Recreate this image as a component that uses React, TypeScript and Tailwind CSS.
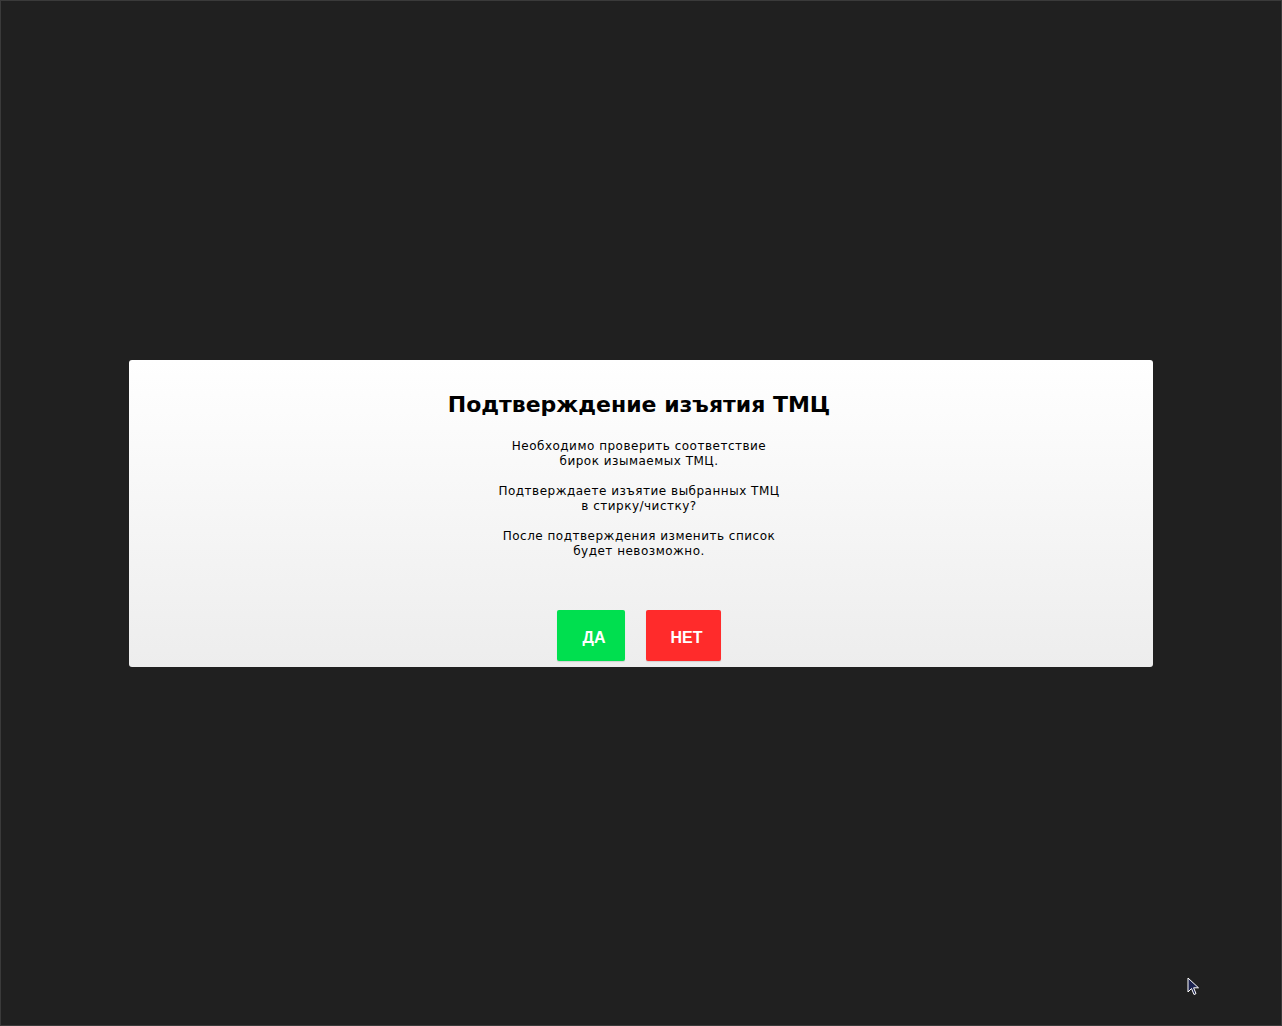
import React from 'react';

const font = { fontFamily: '"DejaVu Sans", Verdana, sans-serif' };

const ConfirmDialog: React.FC = () => {
  return (
    <div
      className="w-[1024px] h-[307px] rounded-[3px] bg-gradient-to-b from-white to-[#ededed] flex flex-col items-center pt-[32px] pb-[6px] pr-1"
      style={font}
    >
      <h1 className="text-[22px] leading-[26px] font-bold text-black">Подтверждение изъятия ТМЦ</h1>

      <div className="mt-[21px] text-[12px] leading-[15px] tracking-[0.5px] text-black text-center">
        <p>Необходимо проверить соответствие<br />бирок изымаемых ТМЦ.</p>
        <p className="mt-[15px]">Подтверждаете изъятие выбранных ТМЦ<br />в стирку/чистку?</p>
        <p className="mt-[15px]">После подтверждения изменить список<br />будет невозможно.</p>
      </div>

      <div className="mt-auto flex gap-[21px]">
        <button
          className="w-[68px] h-[51px] pl-[6px] pt-[6px] rounded-[2px] bg-[#00df4f] text-white text-[16px] font-bold flex items-center justify-center shadow-[0_1px_1px_rgba(0,0,0,0.12)]"
          style={{ fontFamily: '"Liberation Sans", Arial, sans-serif' }}
        >
          ДА
        </button>
        <button
          className="w-[75px] h-[51px] pl-[6px] pt-[6px] rounded-[2px] bg-[#ff2b2b] text-white text-[16px] font-bold flex items-center justify-center shadow-[0_1px_1px_rgba(0,0,0,0.12)]"
          style={{ fontFamily: '"Liberation Sans", Arial, sans-serif' }}
        >
          НЕТ
        </button>
      </div>
    </div>
  );
};

export default function App() {
  return (
    <div className="relative w-[1282px] h-[1026px] bg-[#202020] border border-[#3a3a3a] flex items-center justify-center overflow-hidden">
      <ConfirmDialog />

      {/* mouse pointer */}
      <svg className="absolute left-[1186px] top-[976px]" width="14" height="20" viewBox="0 0 14 20">
        <path d="M1 1 L1 15 L4.5 11.5 L7 17.5 L9 16.6 L6.6 10.8 L11.5 10.8 Z" fill="#1c2350" stroke="#ffffff" strokeWidth="1" strokeLinejoin="round" />
      </svg>
    </div>
  );
}
